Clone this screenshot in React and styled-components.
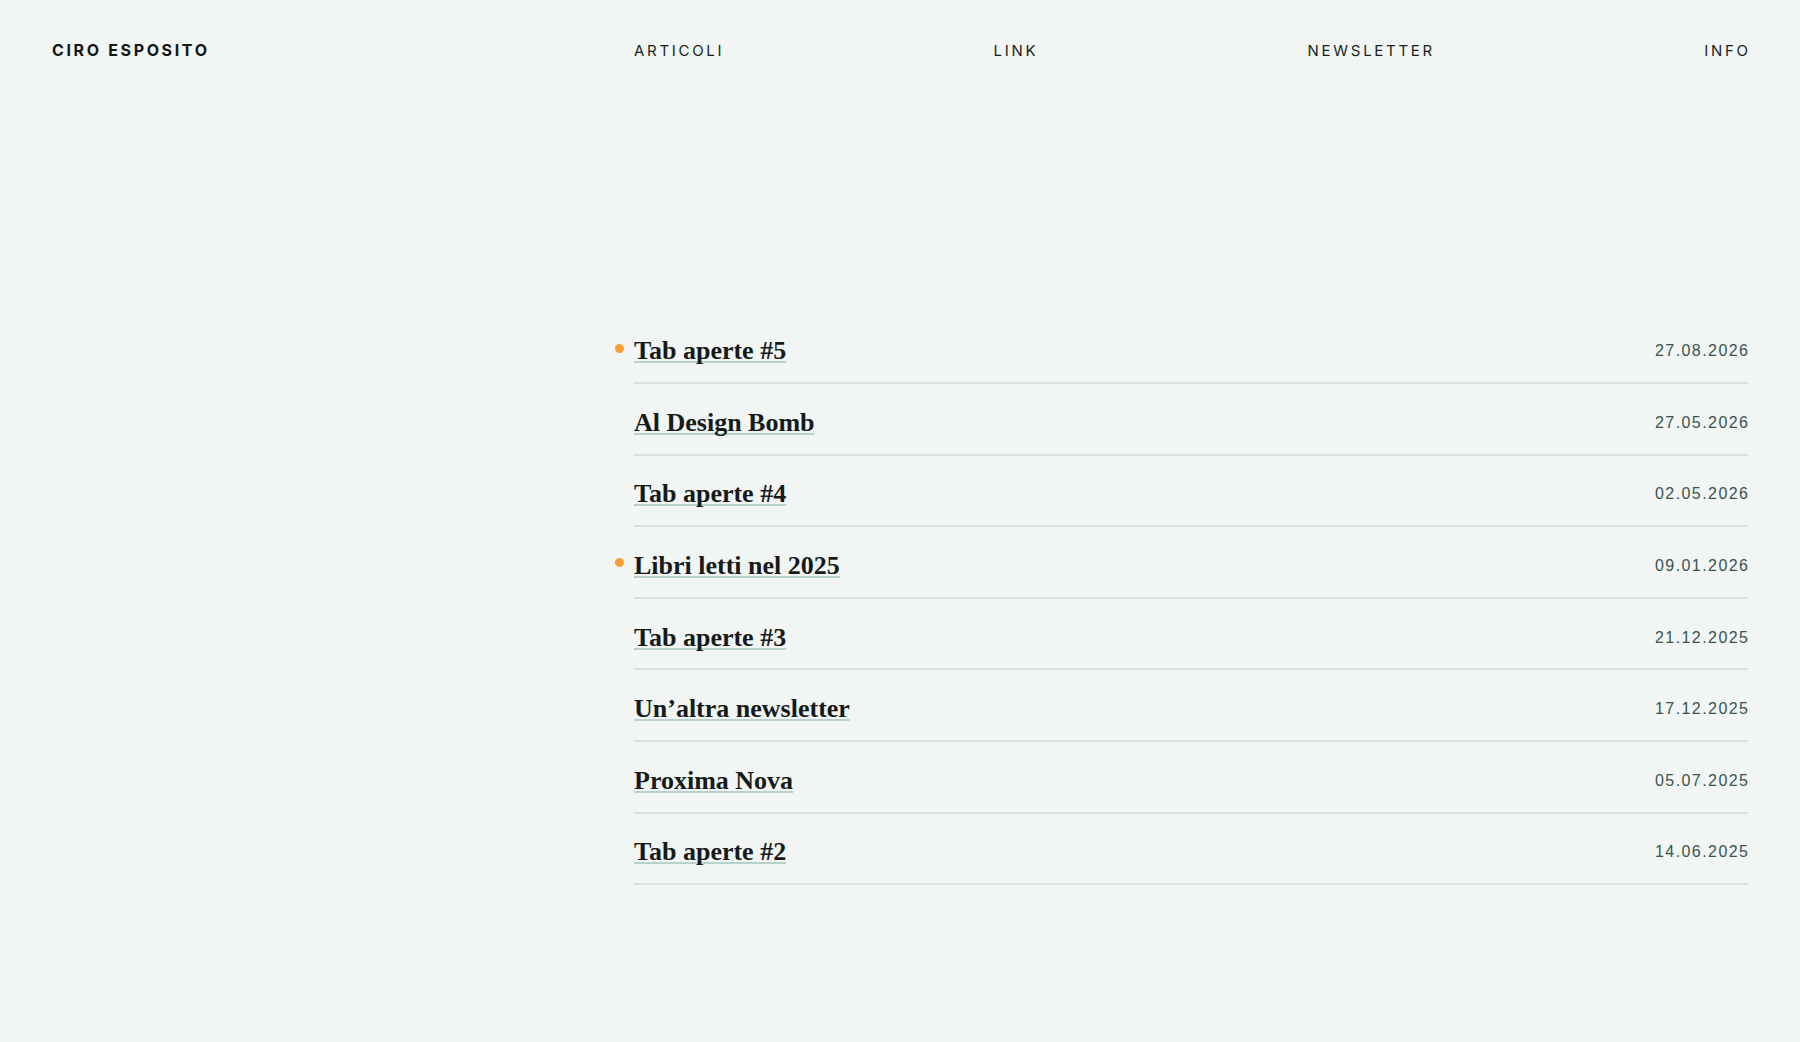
import styled, { createGlobalStyle } from "styled-components";

const posts = [
  { title: "Tab aperte #5", date: "27.08.2026", isNew: true },
  { title: "Al Design Bomb", date: "27.05.2026" },
  { title: "Tab aperte #4", date: "02.05.2026" },
  { title: "Libri letti nel 2025", date: "09.01.2026", isNew: true },
  { title: "Tab aperte #3", date: "21.12.2025" },
  { title: "Un’altra newsletter", date: "17.12.2025" },
  { title: "Proxima Nova", date: "05.07.2025" },
  { title: "Tab aperte #2", date: "14.06.2025" },
];

export default function App() {
  return (
    <>
      <GlobalStyle />
      <Page>
        <Header>
          <Brand href="#">Ciro Esposito</Brand>
          <Nav>
            <NavLink href="#">Articoli</NavLink>
            <NavLink href="#">Link</NavLink>
            <NavLink href="#">Newsletter</NavLink>
            <NavLink href="#">Info</NavLink>
          </Nav>
        </Header>
        <Main>
          <PostList>
            {posts.map((post) => (
              <PostRow key={post.title}>
                {post.isNew && <NewDot />}
                <PostTitle href="#">{post.title}</PostTitle>
                <PostDate>{post.date}</PostDate>
              </PostRow>
            ))}
          </PostList>
        </Main>
      </Page>
    </>
  );
}

const GlobalStyle = createGlobalStyle`
  html, body {
    margin: 0;
    background: #f1f5f4;
  }
  body {
    font-family: Inter, "Liberation Sans", sans-serif;
    color: #161b1a;
  }
`;

const Page = styled.div`
  min-height: 100vh;
  padding: 0 52px;
  box-sizing: border-box;
`;

const Header = styled.header`
  display: grid;
  grid-template-columns: 582px 1fr;
  align-items: center;
  height: 100px;
`;

const Brand = styled.a`
  font-family: Inter, "Liberation Sans", sans-serif;
  font-weight: 700;
  font-size: 16px;
  letter-spacing: 0.165em;
  text-transform: uppercase;
  color: #121716;
  text-decoration: none;
`;

const Nav = styled.nav`
  display: flex;
  justify-content: space-between;
  align-items: center;
`;

const NavLink = styled.a`
  font-family: Inter, "Liberation Sans", sans-serif;
  font-weight: 400;
  font-size: 15px;
  letter-spacing: 0.18em;
  margin-right: -0.18em;
  text-transform: uppercase;
  color: #1a1f1e;
  text-decoration: none;
`;

const Main = styled.main`
  display: grid;
  grid-template-columns: 582px 1fr;
  padding-top: 212.5px;
`;

const PostList = styled.ul`
  grid-column: 2;
  list-style: none;
  margin: 0;
  padding: 0;
`;

const PostRow = styled.li`
  position: relative;
  display: flex;
  align-items: center;
  justify-content: space-between;
  padding: 21.7px 0 13.9px;
  border-bottom: 2px solid #d6e2df;
`;

const NewDot = styled.span`
  position: absolute;
  left: -19px;
  top: 31px;
  width: 9px;
  height: 9px;
  border-radius: 50%;
  background: #f89f33;
`;

const PostTitle = styled.a`
  font-family: "Liberation Serif", "DejaVu Serif", serif;
  font-weight: 700;
  font-size: 26px;
  line-height: 34px;
  color: #161b1a;
  text-decoration: underline;
  text-decoration-color: #b7d1cc;
  text-decoration-thickness: 2px;
  text-underline-offset: 2px;
  text-decoration-skip-ink: none;
`;

const PostDate = styled.span`
  font-family: "Liberation Sans", Arial, sans-serif;
  font-size: 16px;
  letter-spacing: 0.09em;
  margin-right: -0.09em;
  color: #38544d;
`;
